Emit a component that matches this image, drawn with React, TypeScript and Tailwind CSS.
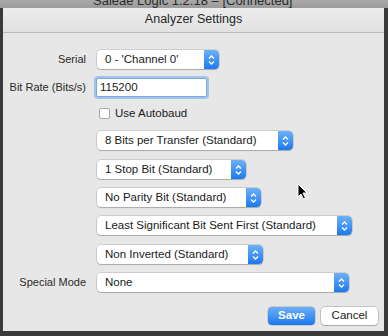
const font = { fontFamily: '"Liberation Sans", Arial, sans-serif' };

function Stepper() {
  return (
    <span className="flex h-full w-[15px] shrink-0 flex-col items-center justify-center rounded-r-[4px] bg-gradient-to-b from-[#6cb1f7] to-[#1b78ee]">
      <svg width="7" height="10" viewBox="0 0 7 10" fill="none" stroke="white" strokeWidth="1.3">
        <path d="M1 3.5 L3.5 1 L6 3.5" />
        <path d="M1 6.5 L3.5 9 L6 6.5" />
      </svg>
    </span>
  );
}

function Select({ value, width }: { value: string; width: string }) {
  return (
    <div
      className={`flex h-[19px] items-center overflow-hidden rounded-[4px] bg-white shadow-[0_0_0_0.5px_rgba(0,0,0,0.22),0_1px_1px_rgba(0,0,0,0.18)] ${width}`}
    >
      <span className="flex-1 truncate pl-[8px] text-[11.5px] leading-none text-[#1a1a1a]">{value}</span>
      <Stepper />
    </div>
  );
}

function Row({ label, children, className }: { label?: string; children: React.ReactNode; className: string }) {
  return (
    <div className={`flex items-center ${className}`}>
      <div className="w-[83px] shrink-0 whitespace-nowrap text-right text-[11px] text-[#2a2a2a]">{label}</div>
      <div className="ml-[11px] flex items-center">{children}</div>
    </div>
  );
}

export default function App() {
  return (
    <div className="relative flex h-[336px] w-[388px] flex-col overflow-hidden bg-[#4d4d4d]" style={font}>
      <div className="h-[8px] shrink-0 overflow-hidden bg-gradient-to-b from-[#a9a9a9] to-[#9b9b9b]">
        <div className="-mt-[6px] pl-[93px] text-[13px] leading-[13px] text-[#2b2b2b]">
          Saleae Logic 1.2.18 – [Connected]
        </div>
      </div>
      <div className="flex flex-1 bg-[#3a3a3a]">
        <div className="ml-[3px] mr-[4px] flex h-[323px] flex-1 flex-col bg-[#e7e7e7]">
          <div className="flex h-[25px] shrink-0 items-center justify-center border-b border-[#b9b9b9] bg-gradient-to-b from-[#ececec] to-[#e2e2e2] pb-[1px] text-[12.5px] text-[#262626]">
            Analyzer Settings
          </div>
          <div className="flex flex-col">
            <Row label="Serial" className="mt-[17px] h-[19px]">
              <Select value="0 - 'Channel 0'" width="w-[122px]" />
            </Row>
            <Row label="Bit Rate (Bits/s)" className="mt-[9px] h-[19px]">
              <div className="-ml-[1px] flex h-[19px] w-[111px] items-center rounded-[2px] border border-[#7aa9e6] bg-white pl-[3px] text-[11.5px] text-[#1a1a1a] shadow-[0_0_0_2px_rgba(110,165,235,0.55)]">
                115200
              </div>
            </Row>
            <Row className="mt-[7px] h-[19px]">
              <div className="ml-[2px] flex items-center gap-[5px]">
                <span className="h-[11px] w-[11px] rounded-[2px] border border-[#a8a8a8] bg-white" />
                <span className="text-[11.5px] text-[#1a1a1a]">Use Autobaud</span>
              </div>
            </Row>
            <Row className="mt-[8px] h-[19px]">
              <Select value="8 Bits per Transfer (Standard)" width="w-[196px]" />
            </Row>
            <Row className="mt-[10px] h-[19px]">
              <Select value="1 Stop Bit (Standard)" width="w-[149px]" />
            </Row>
            <Row className="mt-[9px] h-[19px]">
              <Select value="No Parity Bit (Standard)" width="w-[164px]" />
            </Row>
            <Row className="mt-[9px] h-[19px]">
              <Select value="Least Significant Bit Sent First (Standard)" width="w-[255px]" />
            </Row>
            <Row className="mt-[10px] h-[19px]">
              <Select value="Non Inverted (Standard)" width="w-[166px]" />
            </Row>
            <Row label="Special Mode" className="mt-[9px] h-[19px]">
              <Select value="None" width="w-[252px]" />
            </Row>
            <div className="mt-[15px] flex justify-end gap-[6px] pr-[6px]">
              <button className="h-[18px] w-[47px] rounded-[4px] bg-gradient-to-b from-[#6ab0f7] to-[#1877ee] text-[11.5px] font-bold text-white shadow-[0_0_0_0.5px_rgba(0,0,0,0.25)]">
                Save
              </button>
              <button className="h-[18px] w-[57px] rounded-[4px] bg-white text-[11.5px] text-[#1a1a1a] shadow-[0_0_0_0.5px_rgba(0,0,0,0.3),0_1px_1px_rgba(0,0,0,0.15)]">
                Cancel
              </button>
            </div>
          </div>
        </div>
      </div>
      <svg className="absolute left-[297px] top-[183px]" width="11" height="17" viewBox="0 0 11 17">
        <path d="M1 1 L1 14 L4 11 L6.5 16 L8.5 15 L6 10 L10 10 Z" fill="black" stroke="white" strokeWidth="1" />
      </svg>
    </div>
  );
}
